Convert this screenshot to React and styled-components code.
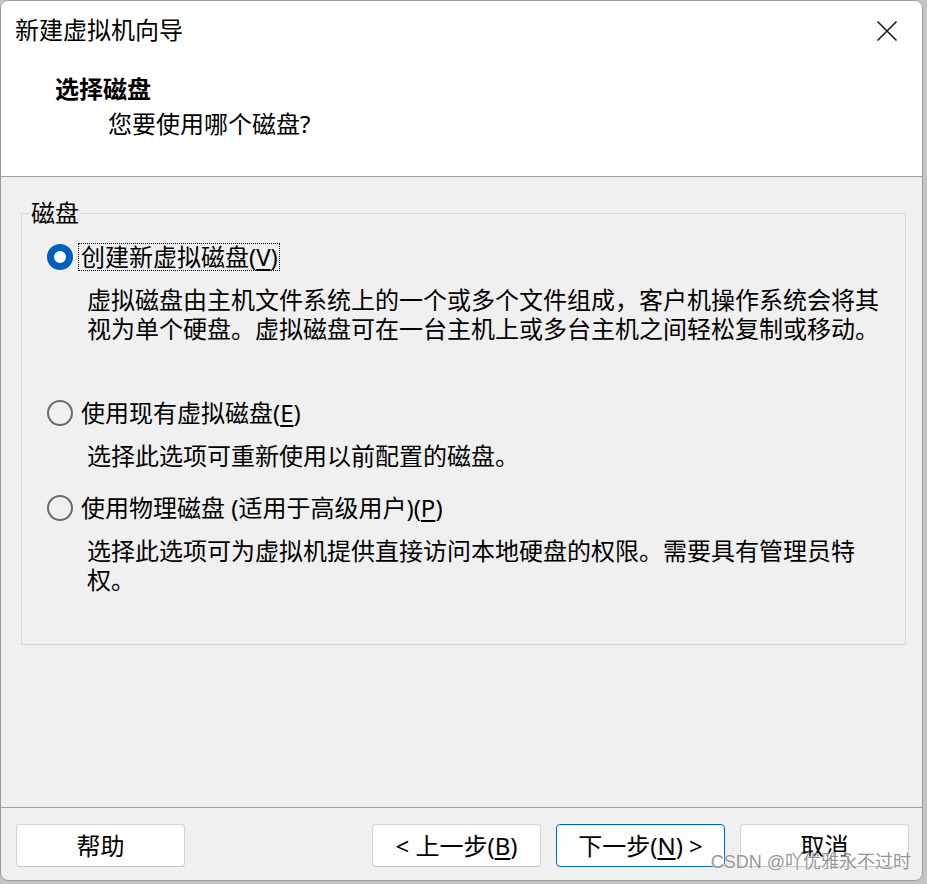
import React from "react";
import styled, { createGlobalStyle } from "styled-components";

const Global = createGlobalStyle`
  html, body { margin: 0; padding: 0; }
  body {
    background: #c4c4c4;
    font-family: "Noto Sans", "Noto Sans CJK SC", sans-serif;
    color: #000;
  }
  * { box-sizing: border-box; }
`;

const Window = styled.div`
  position: relative;
  width: 923px;
  height: 881px;
  border: 1px solid #9c9c9c;
  border-radius: 8px;
  overflow: hidden;
  background: #f0f0f0;
  display: flex;
  flex-direction: column;
`;

const Header = styled.header`
  height: 176px;
  background: #ffffff;
  border-bottom: 1px solid #a0a0a0;
  display: flex;
  flex-direction: column;
`;

const TitleBar = styled.div`
  height: 58px;
  display: flex;
  align-items: center;
  justify-content: space-between;
  padding: 0 20px 0 14px;
`;

const Title = styled.div`
  font-size: 24px;
  line-height: 58px;
`;

const CloseButton = styled.button`
  width: 30px;
  height: 30px;
  border: none;
  background: transparent;
  padding: 0;
  display: flex;
  align-items: center;
  justify-content: center;
  margin-top: 1px;
`;

const Heading = styled.div`
  margin: 15px 0 0 54px;
  font-size: 24px;
  line-height: 30px;
  font-weight: 700;
`;

const SubHeading = styled.div`
  margin: 5px 0 0 107px;
  font-size: 24px;
  line-height: 30px;
`;

const Body = styled.main`
  flex: 1;
  padding: 21px 16px 0 20px;
`;

const Group = styled.fieldset`
  margin: 0;
  padding: 0;
  border: 1px solid #dadada;
  border-bottom-color: #d2d2d2;
  min-width: 0;
`;

const GroupLabel = styled.legend`
  margin-left: 8px;
  padding: 0 1px;
  font-size: 24px;
  line-height: 30px;
`;

const GroupContent = styled.div`
  padding: 14px 0 50px 25px;
`;

const Option = styled.div`
  margin-top: ${(p) => p.$gap || 0}px;
`;

const RadioRow = styled.label`
  display: flex;
  align-items: center;
  height: 30px;
`;

const RadioCircle = styled.span`
  width: 26px;
  height: 26px;
  border-radius: 50%;
  flex: none;
  display: flex;
  align-items: center;
  justify-content: center;
  background: ${(p) => (p.$checked ? "#005fb8" : "transparent")};
  border: ${(p) => (p.$checked ? "none" : "2px solid #6b6b6b")};
  &::after {
    content: "";
    display: ${(p) => (p.$checked ? "block" : "none")};
    width: 12px;
    height: 12px;
    border-radius: 50%;
    background: #ffffff;
  }
`;

const RadioText = styled.span`
  margin-left: 5px;
  padding: 0 1px 0 2px;
  height: 28px;
  font-size: 24px;
  line-height: 26px;
  border: 1px dotted ${(p) => (p.$focused ? "#000" : "transparent")};
  white-space: nowrap;
`;

const Key = styled.span`
  text-decoration: underline;
  text-underline-offset: 3px;
`;

const Desc = styled.div`
  margin: 13px 0 0 40px;
  width: 800px;
  font-size: 24px;
  line-height: 29px;
`;

const Footer = styled.footer`
  height: 73px;
  border-top: 1px solid #a0a0a0;
  display: flex;
  align-items: flex-start;
  padding: 16px 13px 0 15px;
  gap: 15px;
`;

const Spacer = styled.div`
  flex: 1;
`;

const Button = styled.button`
  width: 169px;
  height: 43px;
  background: #fdfdfd;
  border: 1px solid ${(p) => (p.$primary ? "#0067c0" : "#d3d3d3")};
  border-bottom-color: ${(p) => (p.$primary ? "#0067c0" : "#c4c4c4")};
  border-radius: 4px;
  font-family: "Noto Sans", "Noto Sans CJK SC", sans-serif;
  font-size: 24px;
  line-height: 30px;
  color: #000;
  padding: 0;
  white-space: nowrap;
`;

const Watermark = styled.div`
  position: absolute;
  right: 11px;
  bottom: 6px;
  font-family: "Liberation Sans", "Noto Sans CJK SC", sans-serif;
  font-size: 18px;
  line-height: 24px;
  color: rgba(130, 130, 130, 0.85);
  text-shadow: 0 0 2px #ffffff, 0 0 1px #ffffff;
  pointer-events: none;
`;

const CloseIcon = () => (
  <svg width="22" height="22" viewBox="0 0 22 22">
    <path d="M1.5 1.5 L20.5 20.5 M20.5 1.5 L1.5 20.5" stroke="#1a1a1a" strokeWidth="1.6" fill="none" />
  </svg>
);

const options = [
  {
    label: "创建新虚拟磁盘",
    key: "V",
    checked: true,
    desc: "虚拟磁盘由主机文件系统上的一个或多个文件组成，客户机操作系统会将其视为单个硬盘。虚拟磁盘可在一台主机上或多台主机之间轻松复制或移动。",
    gap: 0,
  },
  {
    label: "使用现有虚拟磁盘",
    key: "E",
    checked: false,
    desc: "选择此选项可重新使用以前配置的磁盘。",
    gap: 55,
  },
  {
    label: "使用物理磁盘 (适用于高级用户)",
    key: "P",
    checked: false,
    desc: "选择此选项可为虚拟机提供直接访问本地硬盘的权限。需要具有管理员特权。",
    gap: 23,
  },
];

export default function App() {
  return (
    <>
      <Global />
      <Window>
        <Header>
          <TitleBar>
            <Title>新建虚拟机向导</Title>
            <CloseButton aria-label="关闭">
              <CloseIcon />
            </CloseButton>
          </TitleBar>
          <Heading>选择磁盘</Heading>
          <SubHeading>您要使用哪个磁盘?</SubHeading>
        </Header>
        <Body>
          <Group>
            <GroupLabel>磁盘</GroupLabel>
            <GroupContent>
              {options.map((o) => (
                <Option key={o.key} $gap={o.gap}>
                  <RadioRow>
                    <RadioCircle $checked={o.checked} />
                    <RadioText $focused={o.checked}>
                      {o.label}(<Key>{o.key}</Key>)
                    </RadioText>
                  </RadioRow>
                  <Desc>{o.desc}</Desc>
                </Option>
              ))}
            </GroupContent>
          </Group>
        </Body>
        <Footer>
          <Button>帮助</Button>
          <Spacer />
          <Button>
            &lt; 上一步(<Key>B</Key>)
          </Button>
          <Button $primary>
            下一步(<Key>N</Key>) &gt;
          </Button>
          <Button>取消</Button>
        </Footer>
        <Watermark>CSDN @吖优雅永不过时</Watermark>
      </Window>
    </>
  );
}
